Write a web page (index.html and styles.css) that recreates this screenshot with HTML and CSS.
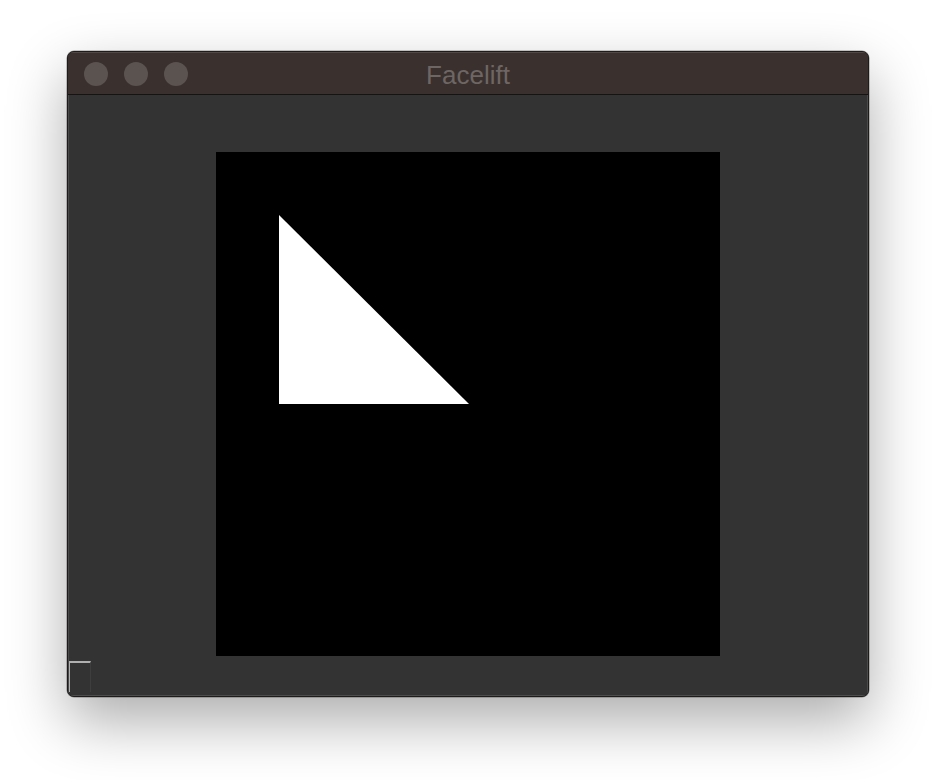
FILE: index.html
```html
<!DOCTYPE html>
<html>
<head>
<meta charset="utf-8">
<title>Facelift</title>
<link rel="stylesheet" href="styles.css">
</head>
<body>
<div class="window">
  <div class="titlebar">
    <div class="lights">
      <span class="light"></span>
      <span class="light"></span>
      <span class="light"></span>
    </div>
    <div class="title">Facelift</div>
  </div>
  <div class="content">
    <div class="canvas">
      <svg class="shape" width="504" height="504" viewBox="0 0 504 504">
        <polygon points="63,63 63,252 253,252" fill="#ffffff"/>
      </svg>
    </div>
    <div class="grip"></div>
  </div>
</div>
</body>
</html>
```
FILE: styles.css
```css
html, body {
  margin: 0;
  padding: 0;
  background: #ffffff;
}
body {
  width: 936px;
  height: 780px;
  overflow: hidden;
  display: flex;
  justify-content: center;
  align-items: flex-start;
  padding-top: 51px;
  box-sizing: border-box;
}
.window {
  width: 802px;
  height: 646px;
  box-sizing: border-box;
  border: 1px solid #1e1b1a;
  border-radius: 7px;
  overflow: hidden;
  background: #333333;
  box-shadow: 0 24px 60px rgba(0,0,0,0.33), 0 0 0 0.5px rgba(0,0,0,0.4);
  display: flex;
  flex-direction: column;
}
.titlebar {
  height: 43px;
  flex: none;
  background: #3a302d;
  border-top: 1px solid #524846;
  border-bottom: 1px solid #161313;
  box-sizing: border-box;
  position: relative;
  display: flex;
  align-items: center;
  justify-content: center;
}
.lights {
  position: absolute;
  left: 16px;
  top: 9px;
  display: flex;
  gap: 16px;
}
.light {
  width: 24px;
  height: 24px;
  border-radius: 50%;
  background: #5a5350;
}
.title {
  font-family: "Liberation Sans", Arial, sans-serif;
  font-size: 26px;
  color: #6e6664;
  line-height: 1;
  margin-top: 2px;
}
.content {
  flex: 1;
  position: relative;
  display: flex;
  justify-content: center;
  align-items: flex-start;
  padding-top: 57px;
  border-left: 1px solid #4a4a4a;
  border-right: 1px solid #4a4a4a;
  border-bottom: 1px solid #4d4d4d;
}
.canvas {
  width: 504px;
  height: 504px;
  background: #000000;
}
.shape {
  display: block;
}
.grip {
  position: absolute;
  left: 0;
  bottom: 3px;
  width: 22px;
  height: 31px;
  border-top: 2px solid #b0b0b0;
  border-left: 1px solid #b0b0b0;
  border-right: 1px solid #3e3e3e;
  box-sizing: border-box;
}
```
